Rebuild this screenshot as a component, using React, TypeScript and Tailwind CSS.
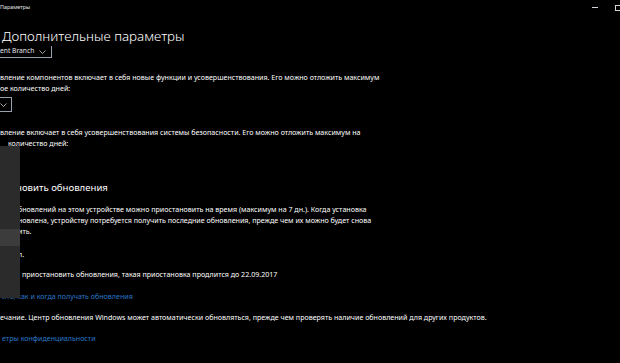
export default function App() {
  return (
    <div
      className="relative h-[363px] w-[620px] overflow-hidden bg-black text-white"
      style={{ fontFamily: '"Noto Sans", "Open Sans", sans-serif' }}
    >
      {/* title bar */}
      <div className="flex h-[15px] items-center justify-between">
        <span className="text-[5.4px] leading-none text-gray-200">Параметры</span>
        <div className="flex items-center gap-[17px]">
          <span className="block h-px w-[6px] bg-gray-300" />
          <span className="-mr-[1px] block h-[6px] w-[6px] border border-gray-300" />
        </div>
      </div>

      {/* page */}
      <div className="flex flex-col">
        <h1 className="mt-[11px] pl-[2px] text-[13.4px] font-light leading-[20px]">Дополнительные параметры</h1>

        <div className="flex h-[12px] w-[52px] items-center border-r border-b border-gray-400">
          <span className="text-[6.7px] leading-none text-gray-200">ent Branch</span>
          <span className="ml-[5px]">
            <Chevron />
          </span>
        </div>

        <p className="mt-[14px] text-[7.1px] leading-[11px]">
          вление компонентов включает в себя новые функции и усовершенствования. Его можно отложить максимум
          <br />
          ое количество дней:
        </p>

        <div className="mt-[3px] flex h-[15px] w-[12px] items-center border border-l-0 border-gray-400">
          <Chevron />
        </div>

        <p className="mt-[15px] text-[7.1px] leading-[11px]">
          вление включает в себя усовершенствования системы безопасности. Его можно отложить максимум на
          <br />
          <span className="pl-[8px]">количество дней:</span>
        </p>

        <h2 className="mt-[31px] pl-[16px] text-[9.6px] leading-[16px]">новить обновления</h2>

        <p className="mt-[8px] pl-[18px] text-[7.1px] leading-[11px]">
          бновлений на этом устройстве можно приостановить на время (максимум на 7 дн.). Когда установка
          <br />
          новлена, устройству потребуется получить последние обновления, прежде чем их можно будет снова
          <br />
          ить.
        </p>

        <p className="mt-[12px] pl-[18px] text-[7.1px] leading-[11px]">л.</p>

        <p className="mt-[9px] pl-[22px] text-[7.1px] leading-[11px]">
          приостановить обновления, такая приостановка продлится до 22.09.2017
        </p>

        <a className="mt-[11px] pl-[2px] text-[7.1px] leading-[11px] text-[#2a78c8]">
          ите, как и когда получать обновления
        </a>

        <p className="mt-[10px] text-[7.1px] leading-[11px]">
          ечание. Центр обновления Windows может автоматически обновляться, прежде чем проверять наличие обновлений
          для других продуктов.
        </p>

        <a className="mt-[10px] pl-[2px] text-[7.1px] leading-[11px] text-[#2a78c8]">етры конфиденциальности</a>
      </div>

      {/* open dropdown list */}
      <div className="absolute left-0 top-[146px] flex h-[152px] w-[20px] flex-col bg-[#2b2b2b]">
        <div className="mt-[83px] h-[17px] bg-[#3c3c3c]" />
      </div>
    </div>
  )
}

function Chevron() {
  return (
    <svg width="7" height="4" viewBox="0 0 7 4" className="block shrink-0">
      <path d="M0.5 0.5 L3.5 3.5 L6.5 0.5" fill="none" stroke="#cfcfcf" strokeWidth="0.8" />
    </svg>
  )
}
